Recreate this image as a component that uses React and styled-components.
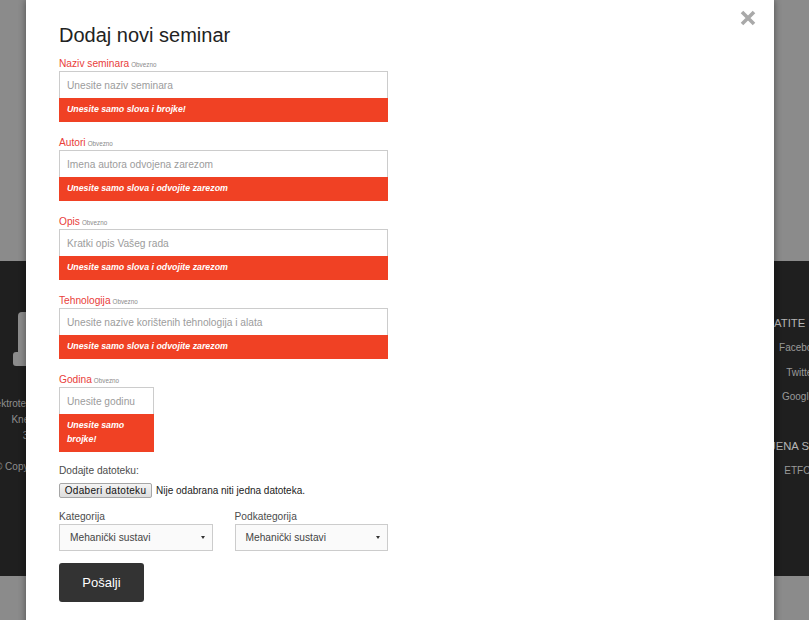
import React from 'react';
import styled, { createGlobalStyle } from 'styled-components';

const GlobalStyle = createGlobalStyle`
  html, body {
    margin: 0;
    padding: 0;
    height: 100%;
    overflow: hidden;
    background: #8b8b8b;
    font-family: "Liberation Sans", Arial, sans-serif;
  }
`;

const Page = styled.div`
  position: relative;
  width: 809px;
  height: 620px;
  overflow: hidden;
  background: #8b8b8b;
`;

const TopBand = styled.div`
  height: 261px;
`;

const Footer = styled.footer`
  height: 315px;
  background: #1f1f1f;
  display: grid;
  grid-template-columns: 104px 1fr 100px;
  width: calc(100% + 42px);
  box-sizing: border-box;
`;

const FooterCol = styled.div`
  display: flex;
  flex-direction: column;
  align-items: center;
  text-align: center;
  white-space: nowrap;
  padding-top: ${(p) => p.$top}px;
`;

const Logo = styled.svg`
  display: block;
  flex: none;
  margin-bottom: 29px;
`;

const FooterLine = styled.div`
  font-size: 10px;
  line-height: 16px;
  color: #8f8f8f;
  margin-top: ${(p) => p.$gap || 0}px;
`;

const FooterHeading = styled.div`
  font-size: 11.3px;
  line-height: 16px;
  color: #b5b5b5;
  margin-top: ${(p) => p.$gap || 0}px;
  margin-left: ${(p) => p.$shift || 0}px;

  span {
    color: #4b3f8f;
  }
`;

const FooterLink = styled.div`
  font-size: 10px;
  line-height: 16px;
  color: #9a9a9a;
  margin-top: ${(p) => p.$gap || 0}px;
`;

const Modal = styled.div`
  position: absolute;
  top: 0;
  left: 26px;
  width: 748px;
  height: 640px;
  background: #fff;
  box-shadow: 0 0 7px rgba(0, 0, 0, 0.45);
  box-sizing: border-box;
  padding: 23px 0 0 33px;
`;

const Close = styled.button`
  position: absolute;
  top: 10px;
  right: 18px;
  width: 16px;
  height: 16px;
  padding: 0;
  border: 0;
  background: none;
  cursor: pointer;

  svg {
    display: block;
  }
`;

const Title = styled.h2`
  margin: 0 0 10px;
  font-size: 20px;
  line-height: 24px;
  font-weight: normal;
  color: #222;
`;

const Form = styled.form`
  width: 329px;
`;

const Field = styled.div`
  margin-bottom: ${(p) => (p.$last ? 12 : 14)}px;
  width: ${(p) => p.$width || '100%'};
`;

const Label = styled.label`
  display: block;
  height: 14px;
  font-size: 10.2px;
  line-height: 14px;
  white-space: nowrap;
  color: ${(p) => (p.$error ? '#e9403a' : '#4d4d4d')};
`;

const Required = styled.span`
  font-size: 6.3px;
  line-height: 1;
  color: #8a8a8a;
  margin-left: 2px;
`;

const Input = styled.input`
  display: block;
  width: 100%;
  height: 27px;
  box-sizing: border-box;
  margin: 0;
  padding: 0 7px;
  border: 1px solid #cccccc;
  border-bottom: 0;
  background: #fff;
  font-family: "Liberation Sans", Arial, sans-serif;
  font-size: 10.2px;
  color: #333;
  outline: none;

  &::placeholder {
    color: #9c9c9c;
  }
`;

const ErrorText = styled.small`
  display: block;
  padding: 4px 8px 6px;
  background: #f04124;
  color: #fff;
  font-size: 8.8px;
  line-height: 14px;
  font-weight: bold;
  font-style: italic;
`;

const FileRow = styled.div`
  display: flex;
  align-items: center;
  gap: 4px;
  margin-top: 5px;
`;

const FileButton = styled.button`
  height: 15px;
  width: 93px;
  padding: 0;
  box-sizing: border-box;
  border: 1px solid #a6a6a6;
  border-radius: 2px;
  background: linear-gradient(#f4f4f4, #dddddd);
  font-family: "Liberation Sans", Arial, sans-serif;
  font-size: 10px;
  letter-spacing: 0.3px;
  color: #111;
  line-height: 13px;
`;

const FileStatus = styled.span`
  font-size: 10px;
  line-height: 14px;
  color: #222;
`;

const SelectRow = styled.div`
  display: grid;
  grid-template-columns: 1fr 1fr;
  gap: 22px;
  margin-top: 12px;
`;

const SelectBox = styled.div`
  height: 27px;
  box-sizing: border-box;
  border: 1px solid #cccccc;
  background: #fafafa;
  display: flex;
  align-items: center;
  justify-content: space-between;
  padding: 0 7px 0 10px;
  font-size: 10.2px;
  color: #444;
`;

const Caret = styled.span`
  width: 0;
  height: 0;
  border-left: 2.5px solid transparent;
  border-right: 2.5px solid transparent;
  border-top: 3px solid #333;
`;

const Submit = styled.button`
  display: block;
  margin-top: 12px;
  width: 85px;
  height: 39px;
  border: 0;
  border-radius: 3px;
  background: #333333;
  color: #fff;
  font-family: "Liberation Sans", Arial, sans-serif;
  font-size: 13px;
  cursor: pointer;
`;

const fields = [
  { label: 'Naziv seminara', placeholder: 'Unesite naziv seminara', error: 'Unesite samo slova i brojke!' },
  { label: 'Autori', placeholder: 'Imena autora odvojena zarezom', error: 'Unesite samo slova i odvojite zarezom' },
  { label: 'Opis', placeholder: 'Kratki opis Vašeg rada', error: 'Unesite samo slova i odvojite zarezom' },
  { label: 'Tehnologija', placeholder: 'Unesite nazive korištenih tehnologija i alata', error: 'Unesite samo slova i odvojite zarezom' },
  { label: 'Godina', placeholder: 'Unesite godinu', error: 'Unesite samo brojke!', width: '95px', last: true },
];

const Select = ({ label, value }) => (
  <div>
    <Label>{label}</Label>
    <SelectBox>
      {value}
      <Caret />
    </SelectBox>
  </div>
);

const App = () => (
  <Page>
    <GlobalStyle />
    <TopBand />
    <Footer>
      <FooterCol $top={51}>
        <Logo width="80" height="55" viewBox="0 0 80 55">
          <rect x="6" y="0" width="68" height="47" rx="4" fill="#8c8c8c" />
          <rect x="1" y="40" width="78" height="14" rx="3" fill="#8c8c8c" />
        </Logo>
        <FooterLine>Elektrotehnički fakultet Osijek</FooterLine>
        <FooterLine>Kneza Trpimira 2b</FooterLine>
        <FooterLine>31000 Osijek</FooterLine>
        <FooterLine $gap={15}>© Copyright ETFOS 2015</FooterLine>
      </FooterCol>
      <div />
      <FooterCol $top={54}>
        <FooterHeading $shift={-12}>PRATITE <span>NAS</span></FooterHeading>
        <FooterLink $gap={9}>Facebook</FooterLink>
        <FooterLink $gap={8.5}>Twitter</FooterLink>
        <FooterLink $gap={8.5}>Google+</FooterLink>
        <FooterHeading $gap={33} $shift={-8}>IZDVOJENA STRANICA</FooterHeading>
        <FooterLink $gap={8.5}>ETFOS</FooterLink>
      </FooterCol>
    </Footer>

    <Modal>
      <Close aria-label="Zatvori">
        <svg width="16" height="16" viewBox="0 0 16 16">
          <path d="M2 2L14 14M14 2L2 14" stroke="#a9a9a9" strokeWidth="3.6" />
        </svg>
      </Close>
      <Title>Dodaj novi seminar</Title>
      <Form>
        {fields.map((f) => (
          <Field key={f.label} $width={f.width} $last={f.last}>
            <Label $error>
              {f.label}
              <Required>Obvezno</Required>
            </Label>
            <Input placeholder={f.placeholder} />
            <ErrorText>{f.error}</ErrorText>
          </Field>
        ))}
        <Label>Dodajte datoteku:</Label>
        <FileRow>
          <FileButton type="button">Odaberi datoteku</FileButton>
          <FileStatus>Nije odabrana niti jedna datoteka.</FileStatus>
        </FileRow>
        <SelectRow>
          <Select label="Kategorija" value="Mehanički sustavi" />
          <Select label="Podkategorija" value="Mehanički sustavi" />
        </SelectRow>
        <Submit type="button">Pošalji</Submit>
      </Form>
    </Modal>
  </Page>
);

export default App;
